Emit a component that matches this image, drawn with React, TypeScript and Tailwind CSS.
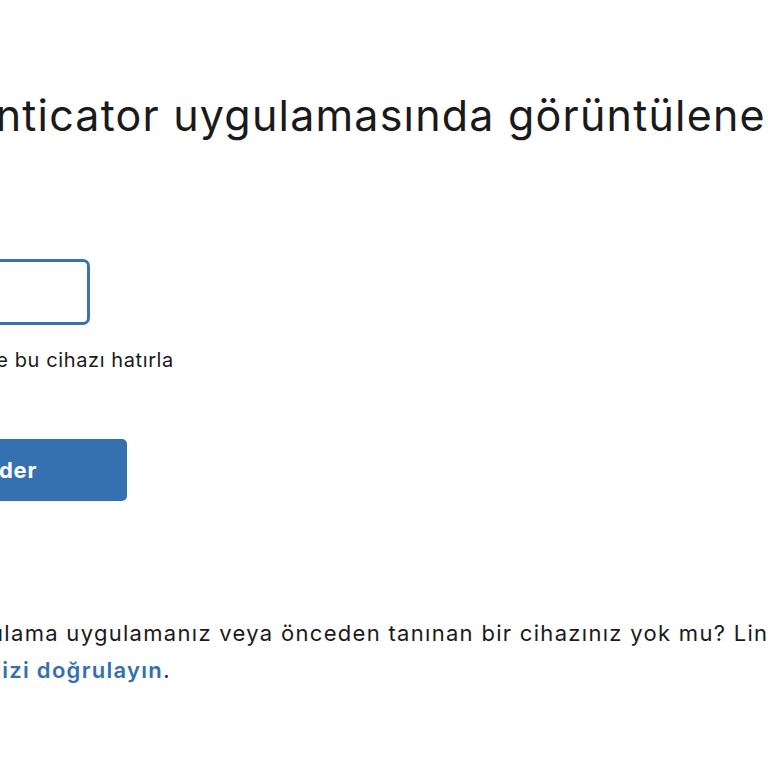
import React from "react";

export default function App() {
  return (
    <div className="w-[768px] h-[768px] overflow-hidden bg-white text-[#1a1a1a] font-['Inter','Liberation_Sans',sans-serif]">
      <div className="flex flex-col items-start pt-[91px]">
        <h1 className="ml-[-130px] whitespace-nowrap text-[43px] leading-[48px] font-normal tracking-[1.2px]">
          Authenticator uygulamasında görüntülenen kodu girin
        </h1>

        <div className="mt-[120px] ml-[-310px] h-[66px] w-[400px] rounded-[7px] border-[3px] border-[#3a72b0] bg-white" />

        <div className="mt-[21px] ml-[-224px] flex items-center gap-3 whitespace-nowrap text-[20px] leading-[28px] tracking-[0.6px]">
          <span className="h-6 w-6 rounded border-2 border-[#3a72b0] bg-[#3a72b0]" />
          <span>Oturumu açık tut ve bu cihazı hatırla</span>
        </div>

        <button className="mt-[65px] ml-[-131px] h-[62px] w-[258px] rounded-[5px] bg-[#3570b0] pr-[6px] text-[22px] font-bold tracking-[0.8px] text-white">
          Gönder
        </button>

        <p className="mt-[114px] whitespace-nowrap text-[22px] leading-[37px] tracking-[1.3px]">
          <span className="block ml-[-66px]">Doğrulama uygulamanız veya önceden tanınan bir cihazınız yok mu? LinkedIn ile</span>
          <span className="block ml-[-94px]">
            <a className="font-semibold text-[#3470ae]">Kimliğinizi doğrulayın</a>.
          </span>
        </p>
      </div>
    </div>
  );
}
